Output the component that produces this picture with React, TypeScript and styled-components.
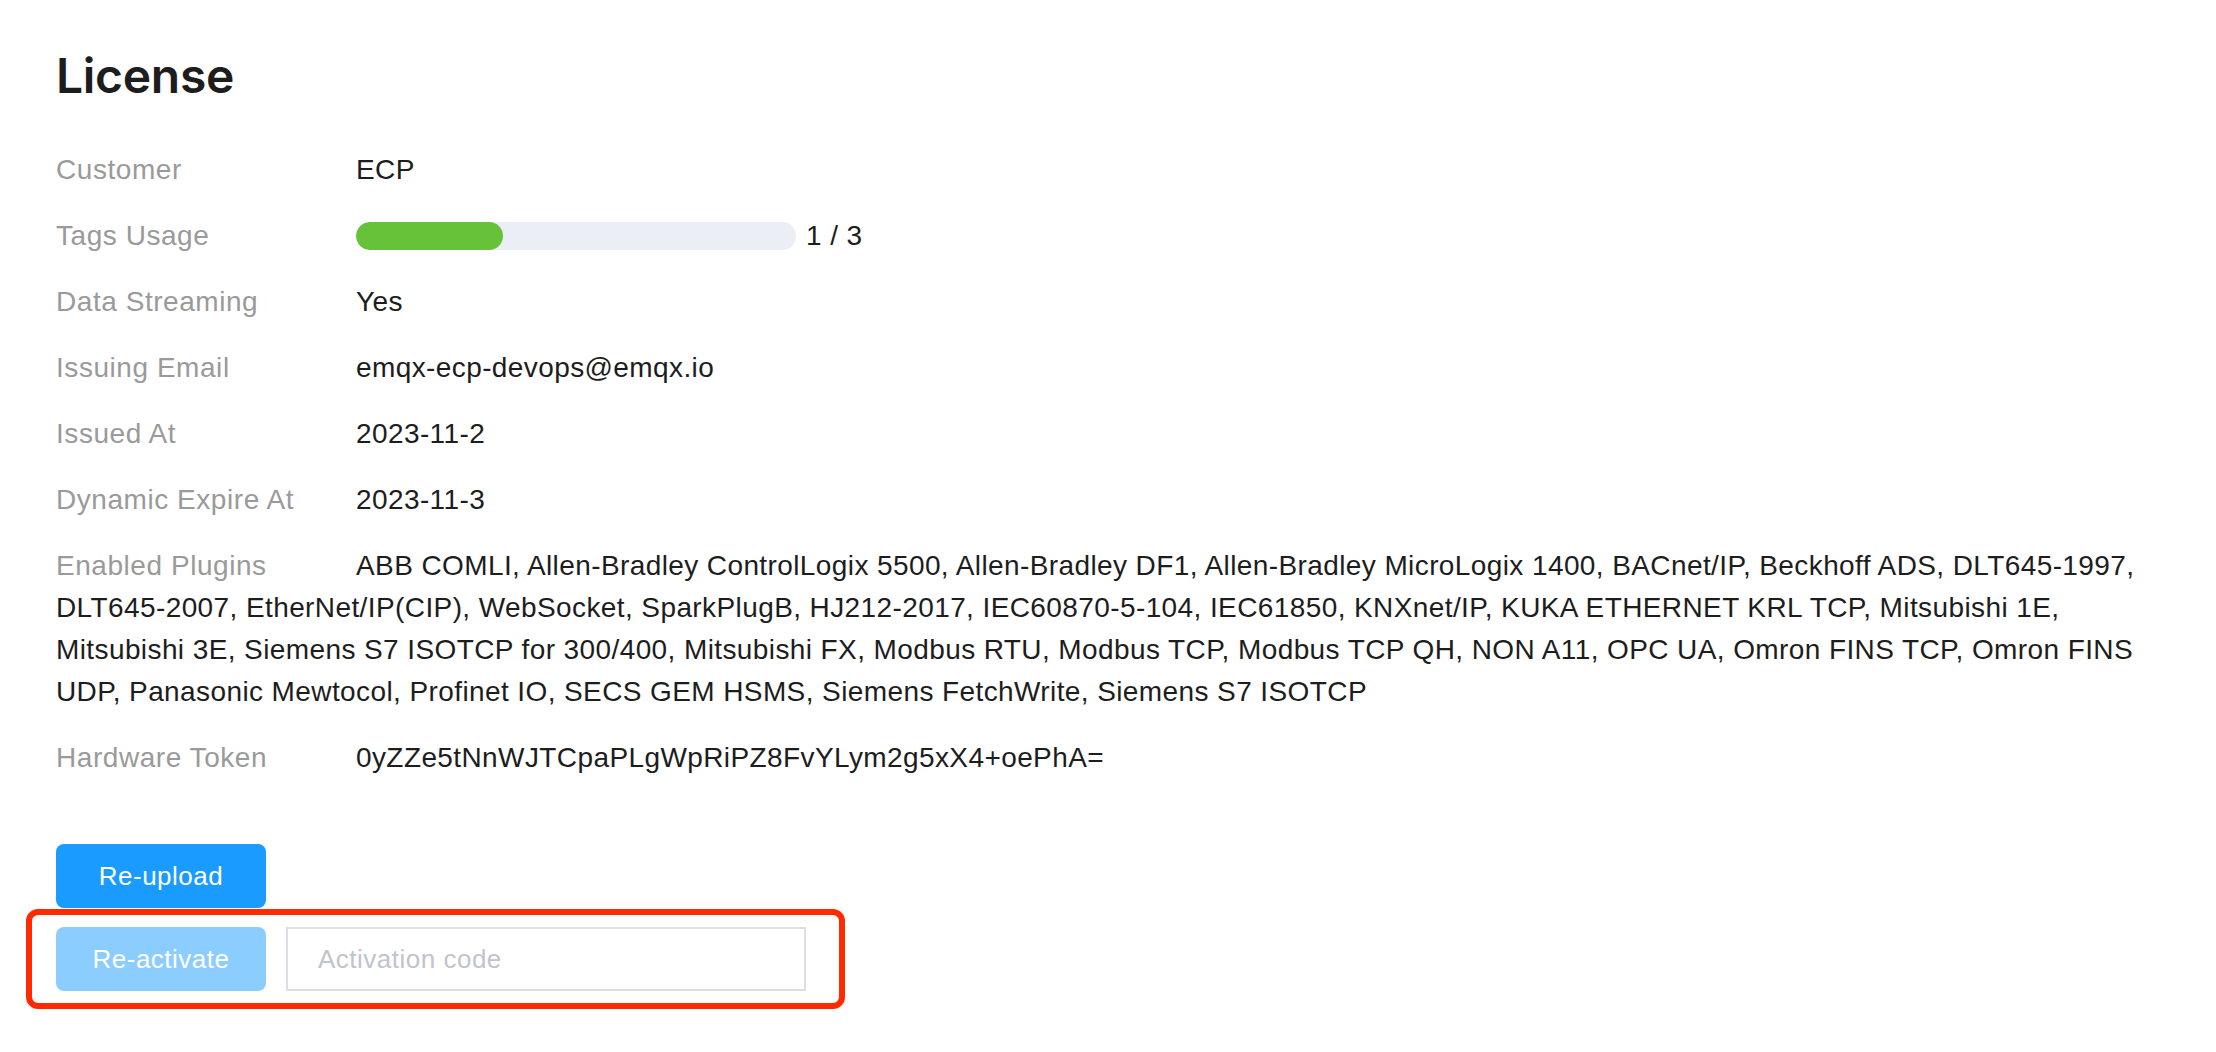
import React from "react";
import styled, { createGlobalStyle } from "styled-components";

const GlobalStyle = createGlobalStyle`
  html, body {
    margin: 0;
    padding: 0;
    background: #ffffff;
  }
  body {
    font-family: "Liberation Sans", Arial, sans-serif;
    color: #1d1d1d;
  }
`;

const Page = styled.main`
  padding: 40px 20px 40px 56px;
  box-sizing: border-box;
  width: 100%;
`;

const Title = styled.h1`
  margin: 0 0 37px;
  font-family: Inter, "Liberation Sans", sans-serif;
  font-weight: 600;
  font-size: 48px;
  line-height: 72px;
  color: #1d1d1d;
  letter-spacing: -0.3px;
`;

const Details = styled.section`
  display: flex;
  flex-direction: column;
  gap: 24px;
`;

const Row = styled.div`
  font-size: 28px;
  line-height: 42px;
  color: #1d1d1d;
  letter-spacing: 0.4px;
`;

const Label = styled.span`
  display: inline-block;
  width: 300px;
  vertical-align: top;
  color: #9a9a9a;
  letter-spacing: 0.55px;
`;

const Usage = styled.span`
  display: inline-flex;
  align-items: center;
  vertical-align: top;
  height: 42px;
  gap: 10px;
`;

const Track = styled.span`
  display: block;
  width: 440px;
  height: 28px;
  border-radius: 14px;
  background: #ebeef5;
  overflow: hidden;
`;

const Fill = styled.span`
  display: block;
  height: 100%;
  border-radius: 14px;
  background: #67c23a;
`;

const Actions = styled.div`
  margin-top: 65px;
  display: flex;
  flex-direction: column;
  align-items: flex-start;
`;

const Button = styled.button<{ $disabled?: boolean }>`
  width: 210px;
  height: 64px;
  border: none;
  border-radius: 8px;
  background: ${(p) => (p.$disabled ? "#8ccdff" : "#1a9bff")};
  color: #ffffff;
  font-family: "Liberation Sans", Arial, sans-serif;
  font-size: 26px;
  letter-spacing: 0.5px;
  cursor: ${(p) => (p.$disabled ? "not-allowed" : "pointer")};
  padding: 0;
`;

const Highlight = styled.div`
  display: flex;
  align-items: center;
  gap: 20px;
  margin: 1px 0 0 -30px;
  padding: 12px 33px 12px 24px;
  border: 6px solid #ff2a00;
  border-radius: 12px;
`;

const CodeInput = styled.input`
  width: 520px;
  height: 64px;
  box-sizing: border-box;
  border: 2px solid #dcdfe6;
  border-radius: 0;
  padding: 0 30px;
  font-family: "Liberation Sans", Arial, sans-serif;
  font-size: 26px;
  letter-spacing: 0.5px;
  color: #1d1d1d;
  outline: none;
  &::placeholder {
    color: #c0c4cc;
  }
`;

const pluginLines = [
  "ABB COMLI, Allen-Bradley ControlLogix 5500, Allen-Bradley DF1, Allen-Bradley MicroLogix 1400, BACnet/IP, Beckhoff ADS, DLT645-1997,",
  "DLT645-2007, EtherNet/IP(CIP), WebSocket, SparkPlugB, HJ212-2017, IEC60870-5-104, IEC61850, KNXnet/IP, KUKA ETHERNET KRL TCP, Mitsubishi 1E,",
  "Mitsubishi 3E, Siemens S7 ISOTCP for 300/400, Mitsubishi FX, Modbus RTU, Modbus TCP, Modbus TCP QH, NON A11, OPC UA, Omron FINS TCP, Omron FINS",
  "UDP, Panasonic Mewtocol, Profinet IO, SECS GEM HSMS, Siemens FetchWrite, Siemens S7 ISOTCP",
];

export default function App() {
  const used = 1;
  const total = 3;
  return (
    <>
      <GlobalStyle />
      <Page>
        <Title>License</Title>
        <Details>
          <Row>
            <Label>Customer</Label>ECP
          </Row>
          <Row>
            <Label>Tags Usage</Label>
            <Usage>
              <Track>
                <Fill style={{ width: `${(used / total) * 100}%` }} />
              </Track>
              <span>
                {used} / {total}
              </span>
            </Usage>
          </Row>
          <Row>
            <Label>Data Streaming</Label>Yes
          </Row>
          <Row>
            <Label>Issuing Email</Label>emqx-ecp-devops@emqx.io
          </Row>
          <Row>
            <Label>Issued At</Label>2023-11-2
          </Row>
          <Row>
            <Label>Dynamic Expire At</Label>2023-11-3
          </Row>
          <Row>
            <Label>Enabled Plugins</Label>
            {pluginLines.map((l, i) => (
              <React.Fragment key={l}>
                {l}
                {i < pluginLines.length - 1 && <br />}
              </React.Fragment>
            ))}
          </Row>
          <Row>
            <Label>Hardware Token</Label>0yZZe5tNnWJTCpaPLgWpRiPZ8FvYLym2g5xX4+oePhA=
          </Row>
        </Details>

        <Actions>
          <Button>Re-upload</Button>
          <Highlight>
            <Button $disabled disabled>
              Re-activate
            </Button>
            <CodeInput placeholder="Activation code" />
          </Highlight>
        </Actions>
      </Page>
    </>
  );
}
